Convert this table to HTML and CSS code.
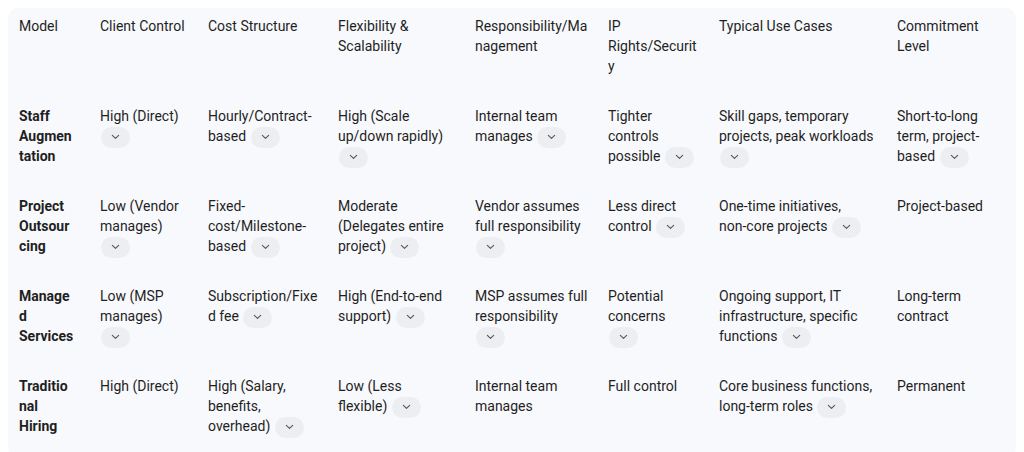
FILE: index.html
```html
<!DOCTYPE html>
<html lang="en">
<head>
<meta charset="utf-8">
<title>Outsourcing models</title>
<link rel="stylesheet" href="styles.css">
</head>
<body>
<div class="table-wrap">
<table class="models">
<colgroup>
<col class="c1"><col class="c2"><col class="c3"><col class="c4"><col class="c5"><col class="c6"><col class="c7"><col class="c8">
</colgroup>
<thead>
<tr>
<th>Model</th><th>Client Control</th><th>Cost Structure</th><th>Flexibility &amp; Scalability</th><th>Responsibility/Management</th><th>IP Rights/Security</th><th>Typical Use Cases</th><th>Commitment Level</th>
</tr>
</thead>
<tbody>
<tr>
<td class="name">Staff Augmentation</td>
<td>High (Direct) <span class="chip"><svg viewBox="0 0 10 6"><path d="M1.5 1.2 5 4.6 8.5 1.2"/></svg></span></td>
<td>Hourly/Contract-based <span class="chip"><svg viewBox="0 0 10 6"><path d="M1.5 1.2 5 4.6 8.5 1.2"/></svg></span></td>
<td>High (Scale up/down rapidly) <span class="chip"><svg viewBox="0 0 10 6"><path d="M1.5 1.2 5 4.6 8.5 1.2"/></svg></span></td>
<td>Internal team manages <span class="chip"><svg viewBox="0 0 10 6"><path d="M1.5 1.2 5 4.6 8.5 1.2"/></svg></span></td>
<td>Tighter controls possible <span class="chip"><svg viewBox="0 0 10 6"><path d="M1.5 1.2 5 4.6 8.5 1.2"/></svg></span></td>
<td>Skill gaps, temporary projects, peak workloads <span class="chip"><svg viewBox="0 0 10 6"><path d="M1.5 1.2 5 4.6 8.5 1.2"/></svg></span></td>
<td>Short-to-long term, project-based <span class="chip"><svg viewBox="0 0 10 6"><path d="M1.5 1.2 5 4.6 8.5 1.2"/></svg></span></td>
</tr>
<tr>
<td class="name">Project Outsourcing</td>
<td>Low (Vendor manages) <span class="chip"><svg viewBox="0 0 10 6"><path d="M1.5 1.2 5 4.6 8.5 1.2"/></svg></span></td>
<td>Fixed-cost/Milestone-based <span class="chip"><svg viewBox="0 0 10 6"><path d="M1.5 1.2 5 4.6 8.5 1.2"/></svg></span></td>
<td>Moderate (Delegates entire project) <span class="chip"><svg viewBox="0 0 10 6"><path d="M1.5 1.2 5 4.6 8.5 1.2"/></svg></span></td>
<td>Vendor assumes full responsibility <span class="chip"><svg viewBox="0 0 10 6"><path d="M1.5 1.2 5 4.6 8.5 1.2"/></svg></span></td>
<td>Less direct control <span class="chip"><svg viewBox="0 0 10 6"><path d="M1.5 1.2 5 4.6 8.5 1.2"/></svg></span></td>
<td>One-time initiatives, <span class="nowrap">non-core</span> projects <span class="chip"><svg viewBox="0 0 10 6"><path d="M1.5 1.2 5 4.6 8.5 1.2"/></svg></span></td>
<td>Project-based</td>
</tr>
<tr>
<td class="name">Managed Services</td>
<td>Low (MSP manages) <span class="chip"><svg viewBox="0 0 10 6"><path d="M1.5 1.2 5 4.6 8.5 1.2"/></svg></span></td>
<td>Subscription/Fixed fee <span class="chip"><svg viewBox="0 0 10 6"><path d="M1.5 1.2 5 4.6 8.5 1.2"/></svg></span></td>
<td>High (End-to-end support) <span class="chip"><svg viewBox="0 0 10 6"><path d="M1.5 1.2 5 4.6 8.5 1.2"/></svg></span></td>
<td>MSP assumes full responsibility <span class="chip"><svg viewBox="0 0 10 6"><path d="M1.5 1.2 5 4.6 8.5 1.2"/></svg></span></td>
<td>Potential concerns <span class="chip"><svg viewBox="0 0 10 6"><path d="M1.5 1.2 5 4.6 8.5 1.2"/></svg></span></td>
<td>Ongoing support, IT infrastructure, specific functions <span class="chip"><svg viewBox="0 0 10 6"><path d="M1.5 1.2 5 4.6 8.5 1.2"/></svg></span></td>
<td>Long-term contract</td>
</tr>
<tr>
<td class="name">Traditional Hiring</td>
<td>High (Direct)</td>
<td>High (Salary, benefits, overhead) <span class="chip"><svg viewBox="0 0 10 6"><path d="M1.5 1.2 5 4.6 8.5 1.2"/></svg></span></td>
<td>Low (Less flexible) <span class="chip"><svg viewBox="0 0 10 6"><path d="M1.5 1.2 5 4.6 8.5 1.2"/></svg></span></td>
<td>Internal team manages</td>
<td>Full control</td>
<td>Core business functions, long-term roles <span class="chip"><svg viewBox="0 0 10 6"><path d="M1.5 1.2 5 4.6 8.5 1.2"/></svg></span></td>
<td>Permanent</td>
</tr>
</tbody>
</table>
</div>
</body>
</html>
```

FILE: styles.css
```css
html, body {
  background: #ffffff;
}
body {
  margin: 8px;
  font-family: Roboto, "Noto Sans", Arial, sans-serif;
  font-size: 14px;
  line-height: 20px;
  color: #1f1f1f;
}
.table-wrap {
  width: 1008px;
  background: #f8f9fc;
  border-radius: 10px;
}
.models {
  width: 1008px;
  table-layout: fixed;
  border-collapse: collapse;
}
.c1 { width: 81px; }
.c2 { width: 108px; }
.c3 { width: 130px; }
.c4 { width: 137px; }
.c5 { width: 133px; }
.c6 { width: 111px; }
.c7 { width: 178px; }
.c8 { width: 130px; }
.models th,
.models td {
  text-align: left;
  vertical-align: top;
  font-weight: 400;
  padding: 8px 11px 22px 11px;
  overflow-wrap: anywhere;
  word-break: break-word;
}
.models th:nth-child(1),
.models td:nth-child(1) { padding-right: 14px; }
.models th:nth-child(3),
.models td:nth-child(3) { padding-right: 6px; }
.models th:nth-child(5),
.models td:nth-child(5) { padding-right: 8px; }
.models td.name {
  font-weight: 700;
}
.nowrap {
  white-space: nowrap;
}
.chip {
  display: inline-flex;
  align-items: center;
  justify-content: center;
  width: 29px;
  height: 21px;
  margin: -3px 0 -3px 1px;
  border-radius: 11px;
  background: #eceef2;
  vertical-align: middle;
}
.chip svg {
  width: 9px;
  height: 6px;
  fill: none;
  stroke: #555a60;
  stroke-width: 1.3;
  stroke-linecap: round;
  stroke-linejoin: round;
}
```
